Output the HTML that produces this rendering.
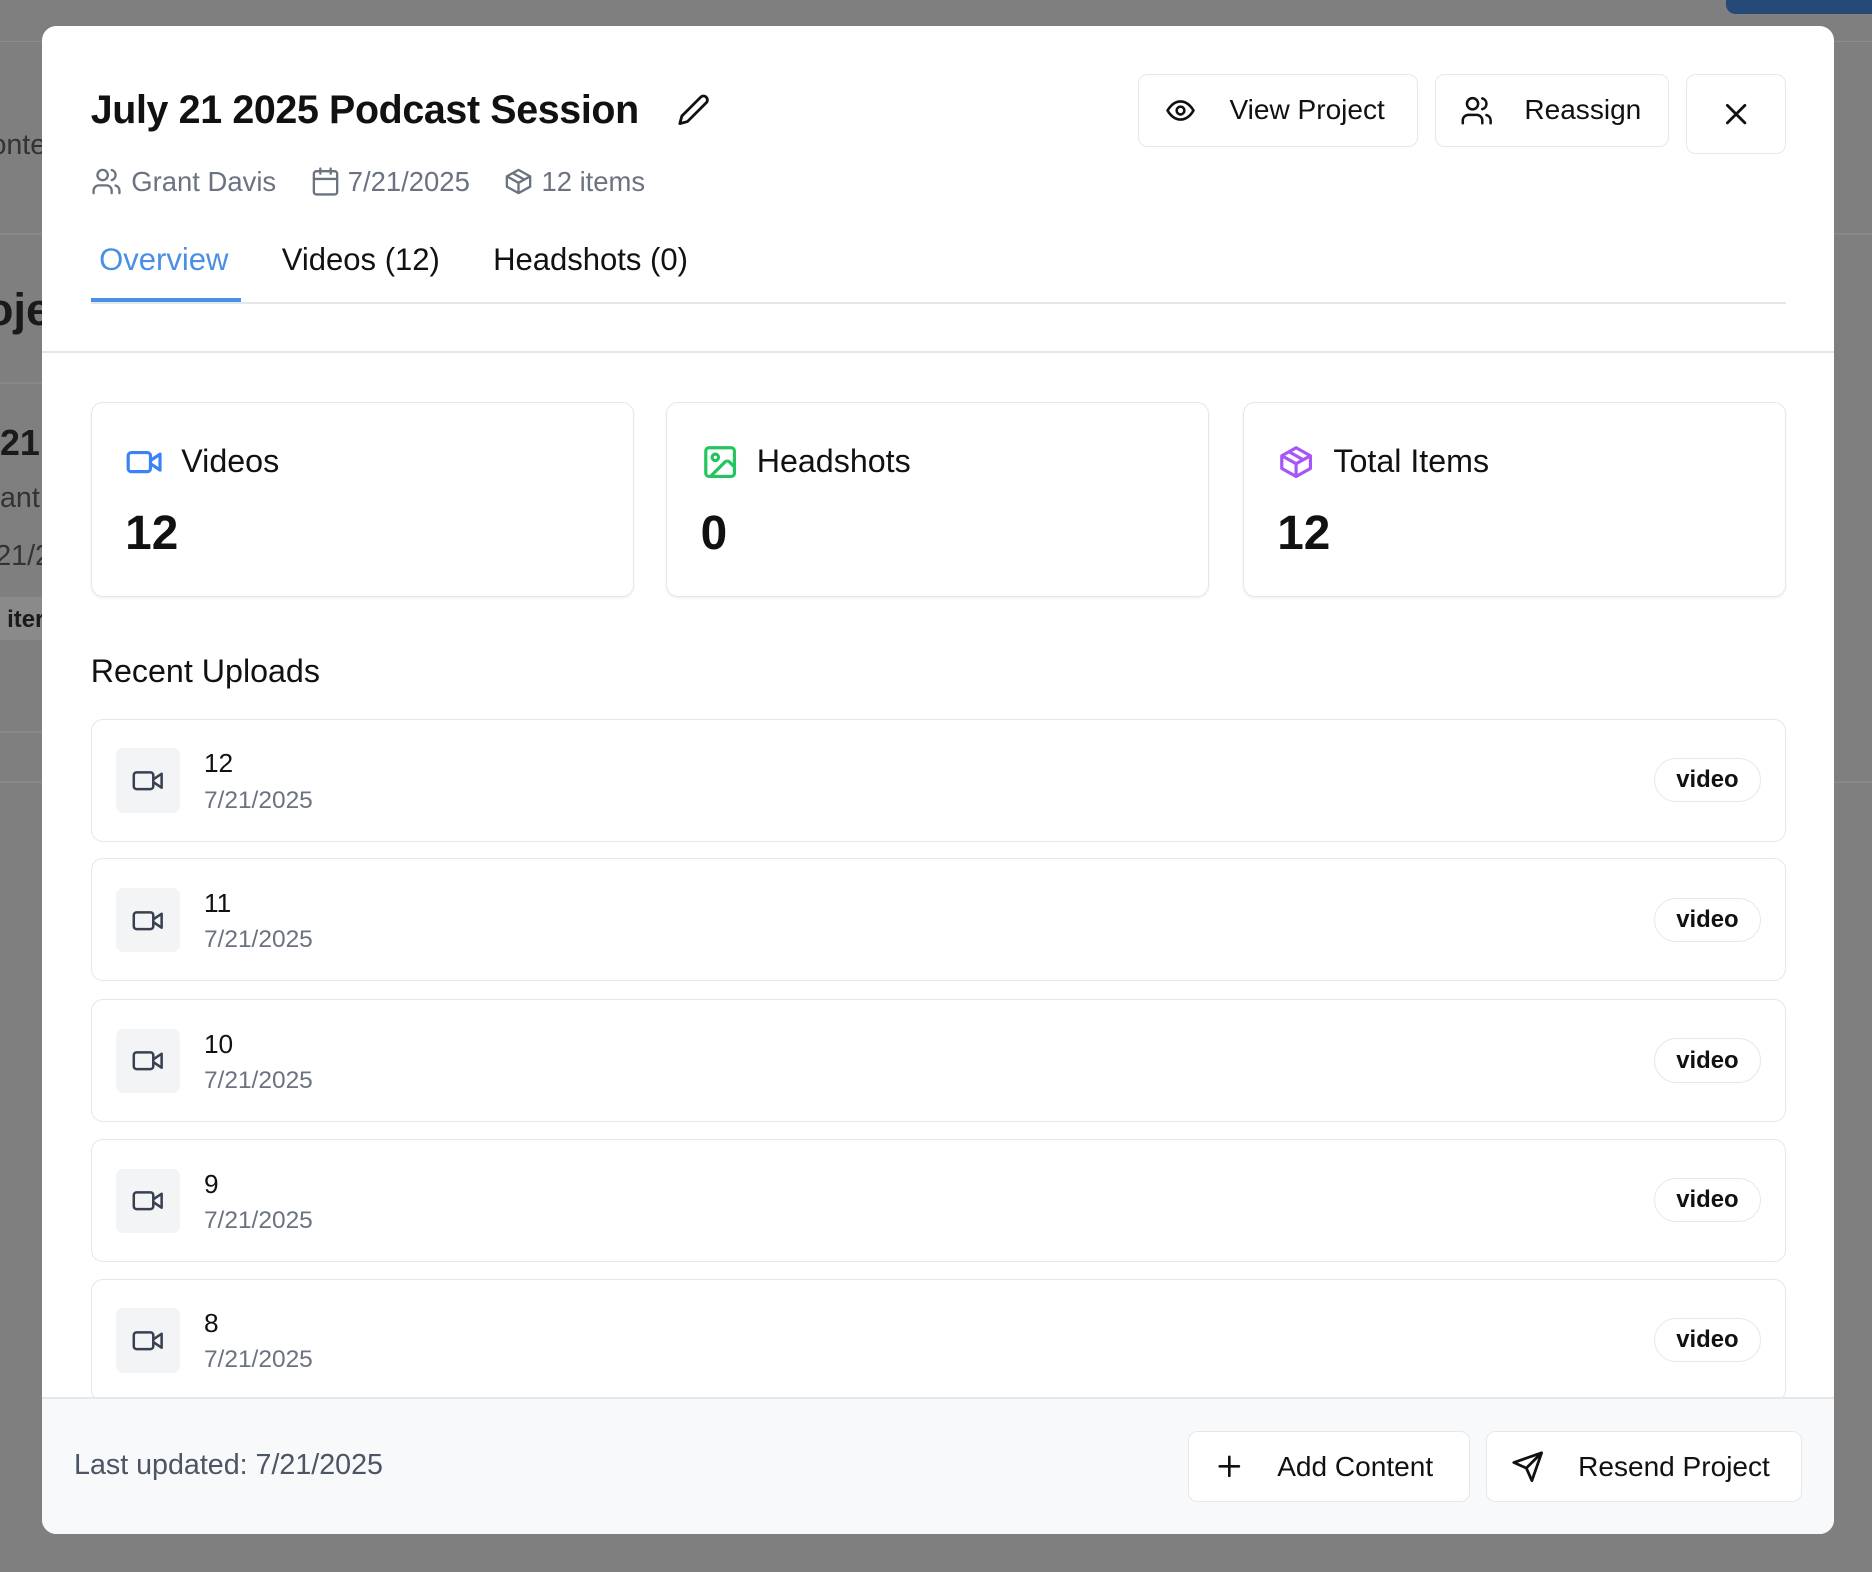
<!DOCTYPE html>
<html><head><meta charset="utf-8"><style>
*{box-sizing:border-box;margin:0;padding:0}
html,body{width:1872px;height:1572px;overflow:hidden;background:#7f7f7f}
#root{zoom:1.19388;position:relative;width:1568px;height:1317px;font-family:"Liberation Sans",sans-serif;color:#111}
.abs{position:absolute}
.bgtxt{position:absolute;color:#1a1a1a;font-size:24px;white-space:nowrap}
.modal{position:absolute;left:35px;top:22px;width:1501px;height:1263px;background:#fff;border-radius:12px;overflow:hidden}
.btn{position:absolute;border:1.5px solid #e5e7eb;border-radius:8px;background:#fff;display:flex;align-items:center;font-size:23.5px;color:#111}
.card{position:absolute;top:315px;width:455px;height:163px;border:1.5px solid #e5e7eb;border-radius:10px;box-shadow:0 1px 2px rgba(0,0,0,.06)}
.card .lab{position:absolute;left:75px;top:33px;font-size:27px}
.card .num{position:absolute;left:28px;top:86px;font-size:40px;font-weight:bold}
.card svg{position:absolute;left:28px;top:33px}
.row{position:absolute;left:41px;width:1420px;height:103px;border:1.5px solid #e5e7eb;border-radius:10px}
.row .ib{position:absolute;left:20px;top:24px;width:54px;height:54px;background:#f3f4f6;border-radius:6px;display:flex;align-items:center;justify-content:center}
.row .t{position:absolute;left:94px;top:24px;font-size:22px}
.row .d{position:absolute;left:94px;top:56px;font-size:20.5px;color:#6b7280}
.row .pill{position:absolute;right:20px;top:32px;width:90px;height:37px;border:1.5px solid #e5e7eb;border-radius:19px;font-size:20px;font-weight:bold;display:flex;align-items:center;justify-content:center}
</style></head><body><div id="root">
<div class="abs" style="left:0;top:34px;width:1568px;height:1px;background:#8c8c8c"></div>
<div class="abs" style="left:1446px;top:0;width:122px;height:12px;background:#264a78;border-radius:0 0 0 8px"></div>
<div class="abs" style="left:0;top:195px;width:1568px;height:2px;background:#888"></div>
<div class="abs" style="left:0;top:320px;width:40px;height:2px;background:#888"></div>
<div class="abs" style="left:0;top:612px;width:40px;height:2px;background:#888"></div>
<div class="abs" style="left:0;top:654px;width:1568px;height:2px;background:#888"></div>
<div class="abs" style="left:0;top:500px;width:40px;height:36px;background:#8a8a8a"></div>
<div class="bgtxt" style="left:-8px;top:108px;color:#333">onte</div>
<div class="bgtxt" style="left:-12px;top:238px;font-size:38px;font-weight:bold">oje</div>
<div class="bgtxt" style="left:0;top:354px;font-size:30px;font-weight:bold">21</div>
<div class="bgtxt" style="left:0;top:404px;color:#333">ant</div>
<div class="bgtxt" style="left:-4px;top:452px;color:#333">21/2</div>
<div class="bgtxt" style="left:6px;top:508px;font-size:20px;font-weight:bold">iter</div>

<div class="modal">
 <div class="abs" style="left:41px;top:52px;font-size:33px;font-weight:bold;letter-spacing:-0.3px">July 21 2025 Podcast Session</div>
 <svg class="abs" style="left:532px;top:56px" width="28" height="28" viewBox="0 0 24 24" fill="none" stroke="#111" stroke-width="2" stroke-linecap="round" stroke-linejoin="round"><path d="M17 3a2.8 2.8 0 0 1 4 4L7.5 20.5 2 22l1.5-5.5Z"/></svg>
 <div class="abs" style="left:41px;top:117px;font-size:23px;color:#6b7280;display:flex;align-items:center;white-space:nowrap">
  <svg width="26" height="26" viewBox="0 0 24 24" fill="none" stroke="#6b7280" stroke-width="1.8" stroke-linecap="round"><path d="M16 21v-2a4 4 0 0 0-4-4H6a4 4 0 0 0-4 4v2"/><circle cx="9" cy="7" r="4"/><path d="M22 21v-2a4 4 0 0 0-3-3.87M16 3.13a4 4 0 0 1 0 7.75"/></svg>
  <span style="margin-left:8px">Grant Davis</span>
  <svg style="margin-left:28px" width="26" height="26" viewBox="0 0 24 24" fill="none" stroke="#6b7280" stroke-width="1.8" stroke-linecap="round"><rect x="3" y="4" width="18" height="18" rx="2"/><path d="M16 2v4M8 2v4M3 10h18"/></svg>
  <span style="margin-left:6px">7/21/2025</span>
  <svg style="margin-left:28px" width="26" height="26" viewBox="0 0 24 24" fill="none" stroke="#6b7280" stroke-width="1.8" stroke-linejoin="round"><path d="M21 8 12 3 3 8v8l9 5 9-5z"/><path d="M3 8l9 5 9-5M12 13v8M7.5 5.5l9 5"/></svg>
  <span style="margin-left:6px">12 items</span>
 </div>
 <div class="abs" style="left:48px;top:181px;font-size:26px;color:#4a8fe7">Overview</div>
 <div class="abs" style="left:201px;top:181px;font-size:26px">Videos (12)</div>
 <div class="abs" style="left:378px;top:181px;font-size:26px">Headshots (0)</div>
 <div class="abs" style="left:41px;top:231px;width:1420px;height:2px;background:#e5e7eb"></div>
 <div class="abs" style="left:41px;top:228px;width:126px;height:3px;background:#4a8fe7"></div>
 <div class="abs" style="left:0;top:272px;width:1501px;height:2px;background:#e5e7eb"></div>

 <div class="btn" style="left:918px;top:40px;width:235px;height:61px">
  <svg style="margin-left:22px" width="26" height="26" viewBox="0 0 24 24" fill="none" stroke="#111" stroke-width="2"><path d="M2 12s3.5-7 10-7 10 7 10 7-3.5 7-10 7S2 12 2 12z"/><circle cx="12" cy="12" r="3"/></svg>
  <span style="margin-left:28px">View Project</span></div>
 <div class="btn" style="left:1167px;top:40px;width:196px;height:61px">
  <svg style="margin-left:20px" width="28" height="28" viewBox="0 0 24 24" fill="none" stroke="#111" stroke-width="1.8" stroke-linecap="round"><path d="M16 21v-2a4 4 0 0 0-4-4H6a4 4 0 0 0-4 4v2"/><circle cx="9" cy="7" r="4"/><path d="M22 21v-2a4 4 0 0 0-3-3.87M16 3.13a4 4 0 0 1 0 7.75"/></svg>
  <span style="margin-left:26px">Reassign</span></div>
 <div class="btn" style="left:1377px;top:40px;width:84px;height:67px;justify-content:center">
  <svg width="22" height="22" viewBox="0 0 24 24" fill="none" stroke="#111" stroke-width="2.6" stroke-linecap="round"><path d="M4 4l16 16M20 4 4 20"/></svg></div>

 <div class="card" style="left:41px">
  <svg width="32" height="32" viewBox="0 0 24 24" fill="none" stroke="#3b82f6" stroke-width="2" stroke-linejoin="round"><rect x="2" y="6" width="14" height="12" rx="2"/><path d="m16 13 6 4V7l-6 4"/></svg>
  <div class="lab">Videos</div><div class="num">12</div></div>
 <div class="card" style="left:523px">
  <svg width="32" height="32" viewBox="0 0 24 24" fill="none" stroke="#22c55e" stroke-width="2" stroke-linejoin="round"><rect x="3" y="3" width="18" height="18" rx="2"/><circle cx="9" cy="9" r="2"/><path d="m21 15-3.1-3.1a2 2 0 0 0-2.8 0L6 21"/></svg>
  <div class="lab">Headshots</div><div class="num">0</div></div>
 <div class="card" style="left:1006px">
  <svg width="32" height="32" viewBox="0 0 24 24" fill="none" stroke="#a855f7" stroke-width="2" stroke-linejoin="round"><path d="M21 8 12 3 3 8v8l9 5 9-5z"/><path d="M3 8l9 5 9-5M12 13v8M7.5 5.5l9 5"/></svg>
  <div class="lab">Total Items</div><div class="num">12</div></div>

 <div class="abs" style="left:41px;top:525px;font-size:27px">Recent Uploads</div>

 <div class="row" style="top:580px"><div class="ib"><svg width="28" height="28" viewBox="0 0 24 24" fill="none" stroke="#374151" stroke-width="1.8" stroke-linejoin="round"><rect x="2" y="6" width="14" height="12" rx="2"/><path d="m16 13 6 4V7l-6 4"/></svg></div><div class="t">12</div><div class="d">7/21/2025</div><div class="pill">video</div></div>
 <div class="row" style="top:697px"><div class="ib"><svg width="28" height="28" viewBox="0 0 24 24" fill="none" stroke="#374151" stroke-width="1.8" stroke-linejoin="round"><rect x="2" y="6" width="14" height="12" rx="2"/><path d="m16 13 6 4V7l-6 4"/></svg></div><div class="t">11</div><div class="d">7/21/2025</div><div class="pill">video</div></div>
 <div class="row" style="top:815px"><div class="ib"><svg width="28" height="28" viewBox="0 0 24 24" fill="none" stroke="#374151" stroke-width="1.8" stroke-linejoin="round"><rect x="2" y="6" width="14" height="12" rx="2"/><path d="m16 13 6 4V7l-6 4"/></svg></div><div class="t">10</div><div class="d">7/21/2025</div><div class="pill">video</div></div>
 <div class="row" style="top:932px"><div class="ib"><svg width="28" height="28" viewBox="0 0 24 24" fill="none" stroke="#374151" stroke-width="1.8" stroke-linejoin="round"><rect x="2" y="6" width="14" height="12" rx="2"/><path d="m16 13 6 4V7l-6 4"/></svg></div><div class="t">9</div><div class="d">7/21/2025</div><div class="pill">video</div></div>
 <div class="row" style="top:1049px"><div class="ib"><svg width="28" height="28" viewBox="0 0 24 24" fill="none" stroke="#374151" stroke-width="1.8" stroke-linejoin="round"><rect x="2" y="6" width="14" height="12" rx="2"/><path d="m16 13 6 4V7l-6 4"/></svg></div><div class="t">8</div><div class="d">7/21/2025</div><div class="pill">video</div></div>

 <div class="abs" style="left:0;top:1148px;width:1501px;height:115px;background:#f8f9fa;border-top:2px solid #e5e7eb"></div>
 <div class="abs" style="left:27px;top:1192px;font-size:24px;color:#4b5563">Last updated: 7/21/2025</div>
 <div class="btn" style="left:960px;top:1177px;width:236px;height:59px">
  <svg style="margin-left:22px" width="24" height="24" viewBox="0 0 24 24" fill="none" stroke="#111" stroke-width="2.2" stroke-linecap="round"><path d="M12 4v16M4 12h16"/></svg>
  <span style="margin-left:28px">Add Content</span></div>
 <div class="btn" style="left:1210px;top:1177px;width:264px;height:59px">
  <svg style="margin-left:20px" width="28" height="28" viewBox="0 0 24 24" fill="none" stroke="#111" stroke-width="2" stroke-linejoin="round"><path d="M22 2 11 13M22 2l-7 20-4-9-9-4z"/></svg>
  <span style="margin-left:28px">Resend Project</span></div>
</div>
</div></body></html>
